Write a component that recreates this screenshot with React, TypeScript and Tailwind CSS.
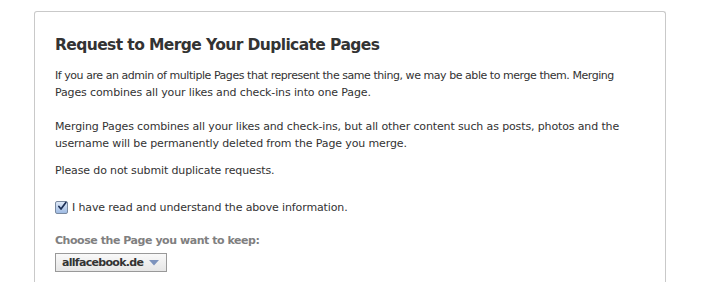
import React, { useState } from "react";

export default function App() {
  const [agreed, setAgreed] = useState(true);

  return (
    <div
      className="h-[282px] w-[701px] overflow-hidden bg-white pl-[34px] pr-[35px] pt-[11px] text-[#333]"
      style={{ fontFamily: '"DejaVu Sans", "Liberation Sans", sans-serif' }}
    >
      <div className="h-[300px] rounded-t-[3px] border border-b-0 border-[#c9c9c9] px-[20px] pt-[23px] text-[11px] leading-[17px] tracking-[-0.13px]">
        <h1 className="text-[15.5px] font-bold leading-[20px] tracking-[-0.6px] text-[#333]">
          Request to Merge Your Duplicate Pages
        </h1>

        {/* first line has to hold "Merging" like the original */}
        <p className="mt-[12px]">
          <span className="tracking-[-0.45px]">
            If you are an admin of multiple Pages that represent the same thing, we may be able to merge them. Merging
          </span>
          <br />
          Pages combines all your likes and check-ins into one Page.
        </p>

        <p className="mt-[17px]">
          Merging Pages combines all your likes and check-ins, but all other content such as posts, photos and the
          username will be permanently deleted from the Page you merge.
        </p>

        <p className="mt-[10px]">Please do not submit duplicate requests.</p>

        <label className="mt-[20px] flex cursor-pointer items-center gap-[4px]">
          <input
            type="checkbox"
            className="sr-only"
            checked={agreed}
            onChange={(e) => setAgreed(e.target.checked)}
          />
          <span className="flex h-[13px] w-[13px] items-center justify-center rounded-[2px] border border-[#7a8aa0] bg-gradient-to-b from-[#dfe9f7] to-[#9fbbe3]">
            {agreed && (
              <svg width="13" height="13" viewBox="0 0 13 13" className="-mt-[2px] ml-[1px]">
                <path d="M2.5 6.5 L5.2 9.8 L11.5 1.2" fill="none" stroke="#1c2f55" strokeWidth="2.2" strokeLinecap="round" strokeLinejoin="round" />
              </svg>
            )}
          </span>
          I have read and understand the above information.
        </label>

        <div className="mt-[16px] font-bold tracking-[-0.45px] text-[#808080]">Choose the Page you want to keep:</div>

        <button className="mt-[4px] flex h-[19px] items-center gap-[6px] border border-[#999] bg-gradient-to-b from-[#f9f9f9] to-[#e6e6e6] pl-[6px] pr-[7px] text-[11px] font-bold tracking-[-0.7px] text-[#333]">
          allfacebook.de
          <svg width="10" height="6" viewBox="0 0 10 6">
            <path d="M0 0 H10 L5 5.5 Z" fill="#7d93bd" />
          </svg>
        </button>
      </div>
    </div>
  );
}
